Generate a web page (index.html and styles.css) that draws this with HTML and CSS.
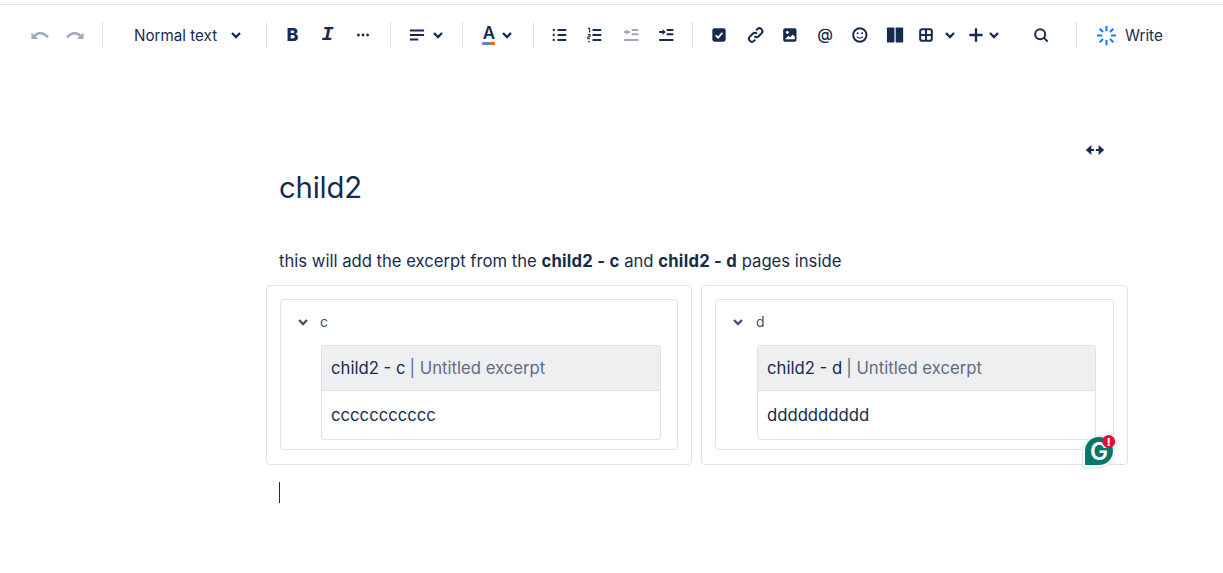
FILE: index.html
```html
<!DOCTYPE html>
<html lang="en">
<head>
<meta charset="utf-8">
<title>child2</title>
<link rel="stylesheet" href="styles.css">
</head>
<body>
<div class="topline"></div>
<header class="toolbar">
  <span class="btn off"><svg viewBox="2 2 20 20"><path d="M6 14C8.500 9.500 15 8.500 20 14.500" class="s"/><path d="M3.500 9.500v6.500h6.500z" class="f"/></svg></span>
  <span class="btn off"><svg viewBox="2 2 20 20"><path d="M18 14C15.500 9.500 9 8.500 4 14.500" class="s"/><path d="M20.500 9.500v6.500h-6.500z" class="f"/></svg></span>
  <span class="sep"></span>
  <span class="style-btn"><span>Normal text</span><svg class="chev" viewBox="0 0 10 10"><path d="M1 3l4 4 4-4" class="s2"/></svg></span>
  <span class="sep"></span>
  <span class="btn"><span class="g-bold">B</span></span>
  <span class="btn"><span class="g-ital">I</span></span>
  <span class="btn"><svg viewBox="0 0 24 24"><circle cx="6.500" cy="12" r="1.700" class="f"/><circle cx="12" cy="12" r="1.700" class="f"/><circle cx="17.500" cy="12" r="1.700" class="f"/></svg></span>
  <span class="sep"></span>
  <span class="pair align"><svg viewBox="0 0 24 24"><path d="M3.500 6.500h17M3.500 12h17M3.500 17.500h10" class="s"/></svg><svg class="chev" viewBox="0 0 10 10"><path d="M1 3l4 4 4-4" class="s2"/></svg></span>
  <span class="sep"></span>
  <span class="pair color"><span class="g-a">A<i class="rainbow"></i></span><svg class="chev" viewBox="0 0 10 10"><path d="M1 3l4 4 4-4" class="s2"/></svg></span>
  <span class="sep"></span>
  <span class="btn"><svg viewBox="0 0 24 24"><circle cx="4.500" cy="6" r="1.400" class="f"/><circle cx="4.500" cy="12" r="1.400" class="f"/><circle cx="4.500" cy="18" r="1.400" class="f"/><path d="M9 6h10.500M9 12h10.500M9 18h10.500" class="s"/></svg></span>
  <span class="btn"><svg viewBox="0 0 24 24"><path d="M3.500 4h2v5M3.500 11.500h2.500v2.500H3.500v2.500H6M3.500 20H6" class="thin"/><path d="M9 6h10.500M9 12h10.500M9 18h10.500" class="s"/></svg></span>
  <span class="btn off"><svg viewBox="-2 0 24 24"><path d="M12 6h8M12 11h8M3 18h17M3 8.500h7" class="s"/><path d="M7 5l-4 3.500L7 12z" class="f"/></svg></span>
  <span class="btn"><svg viewBox="-2 0 24 24"><path d="M12 6h8M12 11h8M3 18h17M3 8.500h6" class="s"/><path d="M7 5l4 3.500L7 12z" class="f"/></svg></span>
  <span class="sep"></span>
  <span class="btn"><svg viewBox="0 0 24 24"><rect x="4" y="4" width="16" height="16" rx="2.500" class="f"/><path d="M8 12.500l3 2.800 5-6" class="w"/></svg></span>
  <span class="btn"><svg viewBox="-2 0 24 24"><path d="M10.500 13.500a3.500 3.500 0 0 0 5 0l3.500-3.500a3.500 3.500 0 0 0-5-5l-1.500 1.500M13.500 10.500a3.500 3.500 0 0 0-5 0L5 14a3.500 3.500 0 0 0 5 5l1.500-1.500" class="s"/></svg></span>
  <span class="btn"><svg viewBox="-1 0 24 24"><rect x="4" y="4" width="16" height="16" rx="2" class="f"/><circle cx="9" cy="9" r="1.700" fill="#fff"/><path d="M6 17l4.500-4 2 1.800 3-3.300L18 14v3z" fill="#fff"/></svg></span>
  <span class="btn"><span class="g-at">@</span></span>
  <span class="btn"><svg viewBox="-1 0 24 24"><circle cx="12" cy="12" r="8" class="s"/><circle cx="9.300" cy="10" r="1.200" class="f"/><circle cx="14.700" cy="10" r="1.200" class="f"/><path d="M8.500 14c1.800 2.400 5.200 2.400 7 0" class="thin"/></svg></span>
  <span class="btn"><svg viewBox="-1 0 24 24"><rect x="2.500" y="3" width="9" height="18" rx="1" class="f"/><rect x="13" y="3" width="9" height="18" rx="1" class="f"/></svg></span>
  <span class="pair table"><svg viewBox="0 0 24 24"><rect x="5" y="5" width="14" height="14" rx="2.500" class="s"/><path d="M12 5v14M5 12h14" class="s"/></svg><svg class="chev" viewBox="0 0 10 10"><path d="M1 3l4 4 4-4" class="s2"/></svg></span>
  <span class="pair plus"><svg viewBox="0 0 24 24"><path d="M12 4v16M4 12h16" class="s3"/></svg><svg class="chev" viewBox="0 0 10 10"><path d="M1 3l4 4 4-4" class="s2"/></svg></span>
  <span class="btn search"><svg viewBox="0 0 24 24"><circle cx="11" cy="11" r="6" class="s"/><path d="M15.500 15.500L20 20" class="s"/></svg></span>
  <span class="sep"></span>
  <span class="write"><svg viewBox="0 0 24 24"><path d="M12 1v6M12 17v6M1 12h6M17 12h6M4.200 4.200l3.800 3.800M16 16l3.800 3.800M19.800 4.200L16 8M8 16l-3.800 3.800" class="blue"/></svg><span>Write</span></span>
</header>

<main class="page">
  <span class="breakout"><svg viewBox="0 0 24 24"><path d="M5 12h6M13 12h6" class="s"/><path d="M8 6.500L2 12l6 5.500zM16 6.500l6 5.500-6 5.500z" class="f"/></svg></span>
  <h1 class="title">child2</h1>
  <p class="intro">this will add the excerpt from the <strong>child2 - c</strong> and <strong>child2 - d</strong> pages inside</p>
  <section class="columns">
    <div class="col">
      <div class="expand">
        <div class="expand-head"><svg class="chev sub" viewBox="0 0 10 10"><path d="M1 3l4 4 4-4" class="s2"/></svg><span>c</span></div>
        <div class="excerpt">
          <div class="excerpt-head">child2 - c <span class="muted">| Untitled excerpt</span></div>
          <div class="excerpt-body">ccccccccccc</div>
        </div>
      </div>
    </div>
    <div class="col wide">
      <div class="expand">
        <div class="expand-head"><svg class="chev sub" viewBox="0 0 10 10"><path d="M1 3l4 4 4-4" class="s2"/></svg><span>d</span></div>
        <div class="excerpt">
          <div class="excerpt-head">child2 - d <span class="muted">| Untitled excerpt</span></div>
          <div class="excerpt-body">dddddddddd</div>
        </div>
      </div>
      <svg class="grammarly" viewBox="0 0 34 36">
        <path d="M.5 33V16.500a16 16 0 1 1 16 16.500z" fill="#fff" stroke="#dfe1e6" stroke-width="1"/>
        <path d="M3 30V16a14 14 0 1 1 14 14z" fill="#00796b"/>
        <text x="17" y="24.500" class="gl">G</text>
        <circle cx="26.700" cy="6.500" r="6.500" fill="#e0103a"/>
        <text x="26.700" y="10.500" class="ex">!</text>
      </svg>
    </div>
  </section>
  <div class="caret"></div>
</main>
</body>
</html>
```

FILE: styles.css
```css
* { box-sizing: border-box; }
html, body { margin: 0; padding: 0; background: #fff; }
body {
  width: 1223px;
  height: 573px;
  overflow: hidden;
  font-family: Inter, "Noto Sans", sans-serif;
  color: #172b4d;
}
svg { display: block; }
.topline { height: 1px; margin-top: 4px; background: #dfe1e6; }

.toolbar {
  display: flex;
  align-items: center;
  height: 26px;
  margin-top: 17px;
  padding-left: 22px;
}
.btn {
  flex: none;
  width: 35px;
  height: 26px;
  display: flex;
  align-items: center;
  justify-content: center;
}
.btn svg, .pair svg { width: 20px; height: 20px; flex: none; }
.btn.off { opacity: 0.4; }
.sep { flex: none; width: 1px; height: 26px; margin: 0 8px 0 10px; background: #dfe1e6; }
.style-btn {
  flex: none;
  width: 145px;
  display: flex;
  align-items: center;
  padding-left: 23px;
  font-size: 15.200px;
  font-weight: 400;
}
.style-btn span { width: 97px; }
svg.chev, .pair svg.chev { width: 10px; height: 10px; flex: none; }
.pair { flex: none; display: flex; align-items: center; height: 26px; }
.align { width: 42px; margin-left: 8px; gap: 6px; margin-right: 3px; }
.color { width: 40px; margin-left: 3px; gap: 6px; padding-left: 8px; margin-right: 9px; }
.table { width: 43px; margin-left: 5px; gap: 9px; }
.plus { width: 35px; margin-left: 7px; gap: 3px; }
.search { margin-left: 22px; margin-right: 8px; }
.s { fill: none; stroke: #172b4d; stroke-width: 2.400; }
.s2 { fill: none; stroke: #172b4d; stroke-width: 2.300; }
.s3 { fill: none; stroke: #172b4d; stroke-width: 2.800; }
.thin { fill: none; stroke: #172b4d; stroke-width: 1.300; }
.f { fill: #172b4d; }
.w { fill: none; stroke: #fff; stroke-width: 2.200; }
.blue { fill: none; stroke: #1d7afc; stroke-width: 2.400; }
.g-bold { font-size: 18px; font-weight: 800; line-height: 1; }
.g-ital { font-family: "Liberation Mono", monospace; font-size: 20px; font-weight: 700; font-style: italic; line-height: 1; }
.g-at { font-size: 16px; font-weight: 500; line-height: 1; padding: 0 0 2px 3px; }
.g-a {
  position: relative;
  width: 14px;
  height: 20px;
  font-size: 17px;
  font-weight: 600;
  line-height: 17px;
  text-align: center;
}
.rainbow {
  position: absolute;
  left: 0;
  bottom: 0;
  width: 13px;
  height: 3px;
  border-radius: 1px;
  background: linear-gradient(90deg, #8270db 0 30%, #2898bd 30% 55%, #e56910 55% 100%);
}
.write {
  flex: none;
  display: flex;
  align-items: center;
  gap: 8px;
  margin-left: 11px;
  font-size: 15.200px;
  font-weight: 400;
}
.write svg { width: 21px; height: 21px; }

.page { position: relative; padding-top: 122px; }
.breakout { position: absolute; left: 1084px; top: 91px; width: 22px; height: 22px; }
.breakout svg { width: 22px; height: 22px; }
.title {
  margin: 0;
  padding-left: 279px;
  font-size: 29.300px;
  line-height: 36px;
  font-weight: 400;
  letter-spacing: -0.2px;
}
.intro {
  margin: 43px 0 0;
  padding-left: 279px;
  font-size: 16.650px;
  line-height: 24px;
}
.intro strong { font-weight: 700; letter-spacing: 0.25px; }
.columns {
  display: grid;
  grid-template-columns: 426px 427px;
  gap: 9px;
  width: 862px;
  margin: 12px 0 0 266px;
}
.col {
  position: relative;
  height: 180px;
  padding: 13px 13px 0;
  border: 1px solid #dfe1e6;
  border-radius: 4px;
}
.expand {
  height: 151px;
  border: 1px solid #dfe1e6;
  border-radius: 4px;
  padding: 0 16px 0 40px;
}
.wide .expand { padding: 0 17px 0 41px; }
.expand-head {
  position: relative;
  height: 45px;
  padding-bottom: 3px;
  display: flex;
  align-items: center;
  font-size: 14px;
  color: #42526e;
}
.expand-head span { margin-left: -1px; }
.chev.sub { position: absolute; left: -23px; top: 17px; }
.wide .chev.sub { left: -24px; }
.chev.sub .s2 { stroke: #42526e; }
.excerpt {
  height: 95px;
  border: 1px solid #dfe1e6;
  border-radius: 3px;
  overflow: hidden;
  font-size: 16.700px;
}
.excerpt-head {
  height: 45px;
  padding: 0 9px;
  display: flex;
  align-items: center;
  gap: 4px;
  background: #eeeff1;
  border-bottom: 1px solid #dfe1e6;
}
.muted { color: #5e6c84; }
.excerpt-body { padding: 0 9px; height: 47px; display: flex; align-items: center; }
.grammarly { position: absolute; left: 380px; top: 149px; width: 34px; height: 36px; }
.gl { font-size: 24px; font-weight: 600; fill: #fff; text-anchor: middle; }
.ex { font-size: 11px; font-weight: 800; fill: #fff; text-anchor: middle; }
.caret { width: 1px; height: 21px; margin: 17px 0 0 279px; background: #172b4d; }
```
